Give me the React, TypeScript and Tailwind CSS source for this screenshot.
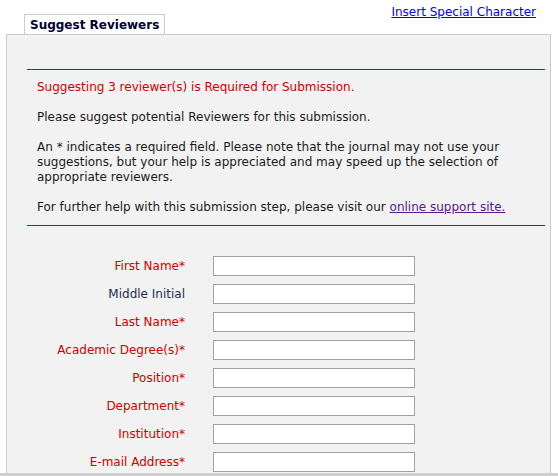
const fields = [
  { label: 'First Name*', required: true },
  { label: 'Middle Initial', required: false },
  { label: 'Last Name*', required: true },
  { label: 'Academic Degree(s)*', required: true },
  { label: 'Position*', required: true },
  { label: 'Department*', required: true },
  { label: 'Institution*', required: true },
  { label: 'E-mail Address*', required: true },
]

export default function App() {
  return (
    <div className="h-[476px] w-[558px] overflow-hidden flex flex-col bg-white font-['DejaVu_Sans',Verdana,sans-serif] text-[12px] leading-[15px] text-[#1a1a1a]">
      {/* Header: tab + link */}
      <div className="flex justify-between items-start h-[34px] shrink-0">
        <div className="ml-[24px] mt-[14px] h-[20px] w-[141px] pl-[5px] bg-white border border-b-0 border-[#cccccc] font-bold text-[12px] leading-[20px] text-[#000033]">
          Suggest Reviewers
        </div>
        <a href="#" className="mt-[5px] mr-[22px] text-[#0000ee] underline">
          Insert Special Character
        </a>
      </div>

      {/* Panel */}
      <div className="flex-1 min-h-0 overflow-hidden ml-[6px] w-[545px] bg-[#f2f2f2] border border-b-0 border-[#cccccc]">
        <div className="ml-[20px] mr-[5px] mt-[34px] border-y border-[#c00000] pt-[10px] pb-[10px] px-[10px]">
          <p className="text-[#cc0000] mb-[15px]">Suggesting 3 reviewer(s) is Required for Submission.</p>
          <p className="mb-[15px]">Please suggest potential Reviewers for this submission.</p>
          <p className="mb-[15px]">
            An * indicates a required field. Please note that the journal may not use your suggestions, but your help is
            appreciated and may speed up the selection of appropriate reviewers.
          </p>
          <p>
            For further help with this submission step, please visit our{' '}
            <a href="#" className="text-[#551a8b] underline">online support site.</a>
          </p>
        </div>

        <div className="mt-[30px] flex flex-col gap-[8px]">
          {fields.map((f) => (
            <div key={f.label} className="flex items-center h-[20px]">
              <div
                className={`w-[178px] text-right ${f.required ? 'text-[#cc0000]' : 'text-[#1c2f4f]'}`}
              >
                {f.label}
              </div>
              <input
                type="text"
                className="ml-[28px] w-[202px] h-[20px] bg-white border border-[#a0a0a0] outline-none"
              />
            </div>
          ))}
        </div>
      </div>

      <div className="h-[3px] shrink-0 bg-[#cfcfcf]" />
    </div>
  )
}
